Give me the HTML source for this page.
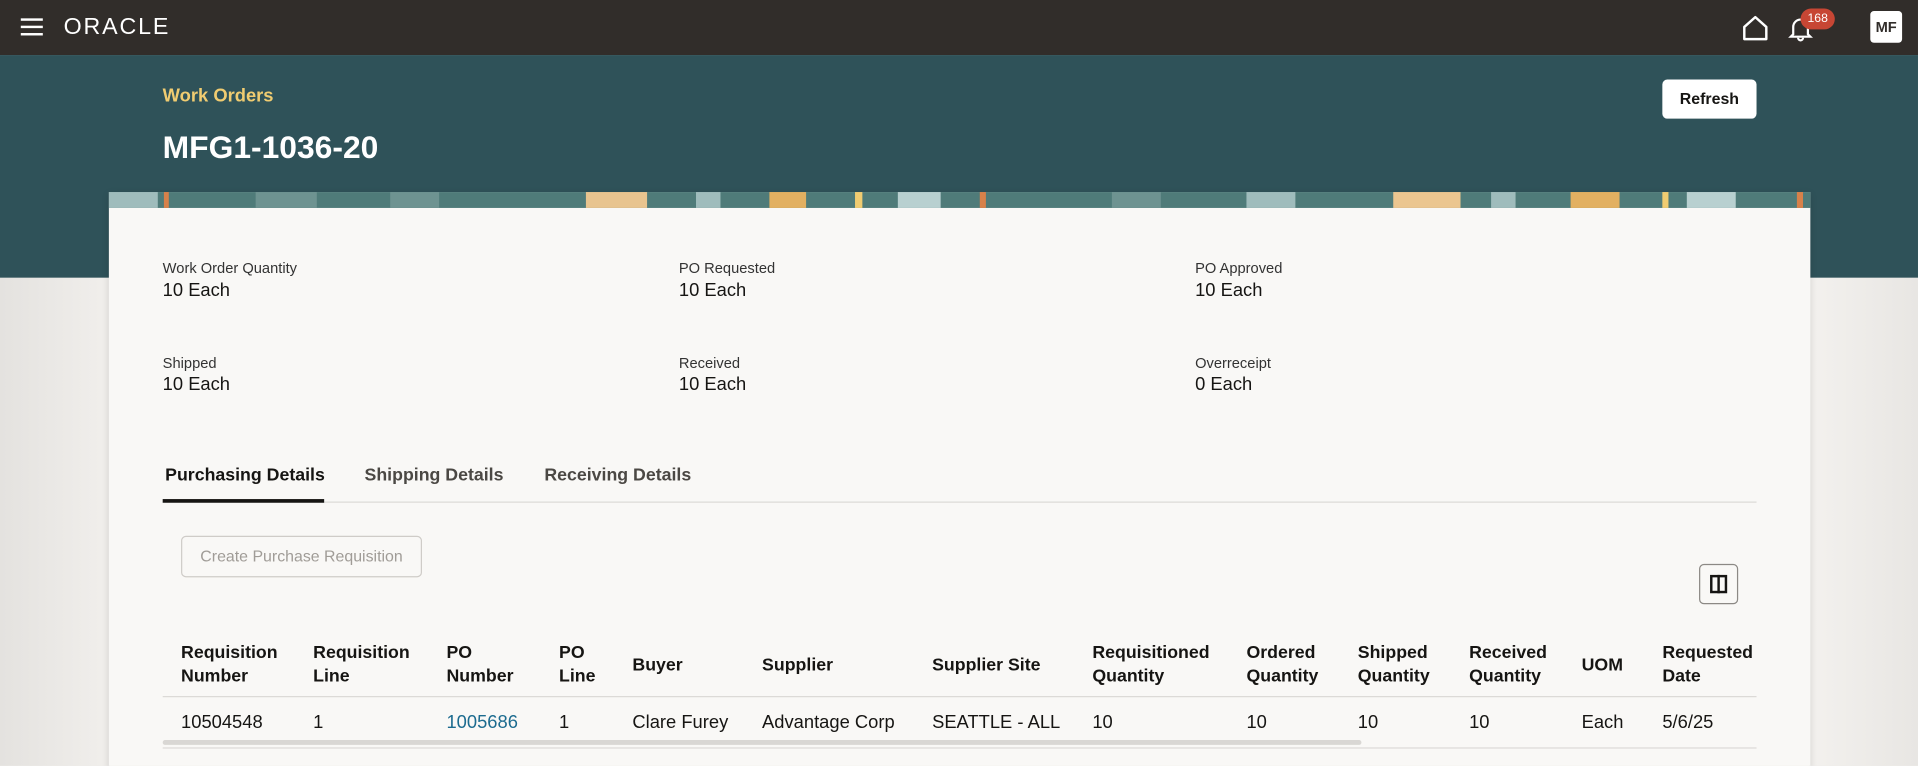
<!DOCTYPE html>
<html><head><meta charset="utf-8">
<style>
*{margin:0;padding:0;box-sizing:border-box}
html,body{width:1918px;height:766px;overflow:hidden;background:#eeece9}
#w{position:absolute;left:0;top:0;width:1568px;height:626px;transform:scale(1.22321);transform-origin:0 0;font-family:"Liberation Sans",sans-serif;color:#161513;overflow:hidden;background:linear-gradient(90deg,#e4e2df 0,#f1efec 90px,#f3f1ee 1480px,#e8e6e3 1568px)}
.a{position:absolute;white-space:nowrap}
.hdr{position:absolute;left:0;top:0;width:1568px;height:45px;background:#312d2a}
.band{position:absolute;left:0;top:45px;width:1568px;height:182px;background:#2f5259}
.card{position:absolute;left:89px;top:157px;width:1391px;height:490px;background:#f9f8f6;box-shadow:0 2px 6px rgba(0,0,0,.15)}
.strip{position:absolute;left:89px;top:157px;width:1391px;height:13px;background:#4f7b79;overflow:hidden}
.strip i{position:absolute;top:0;height:13px;display:block}
.lbl{font-size:12px;color:#333}
.val{font-size:15px}
.th{font-size:14.5px;font-weight:bold;line-height:19px;color:#161513}
.td{font-size:15px}
.tab{font-size:14.5px;font-weight:bold}
</style></head><body><div id="w">
<div class="hdr"></div>
<div class="a" style="left:17px;top:15px;width:18px;height:2px;background:#fff;box-shadow:0 6px 0 #fff,0 12px 0 #fff"></div>
<div class="a" style="left:52px;top:12px;color:#fff;font-size:19px;letter-spacing:1.5px">ORACLE</div>
<svg class="a" style="left:1424px;top:12px" width="22" height="22" viewBox="0 0 22 22"><path d="M2 10 L11 2 L20 10 V20 H2 Z" fill="none" stroke="#fff" stroke-width="2" stroke-linejoin="round"/></svg>
<svg class="a" style="left:1461px;top:12px" width="22" height="22" viewBox="0 0 22 22"><path d="M5 16 V10 A6 6 0 0 1 17 10 V16 L19 18 H3 Z M9 19 A2 2 0 0 0 13 19" fill="none" stroke="#fff" stroke-width="1.8"/></svg>
<div class="a" style="left:1472px;top:7px;width:28px;height:17px;border-radius:9px;background:#c74634;color:#fff;font-size:10px;text-align:center;line-height:17px">168</div>
<div class="a" style="left:1529px;top:9px;width:26px;height:26px;border-radius:3px;background:#fff;color:#312d2a;font-size:12px;font-weight:bold;text-align:center;line-height:26px">MF</div>
<div class="band"></div>
<div class="a" style="left:133px;top:70px;color:#f0cc71;font-size:15px;font-weight:bold">Work Orders</div>
<div class="a" style="left:133px;top:105px;color:#fff;font-size:26px;font-weight:bold">MFG1-1036-20</div>
<div class="a" style="left:1359px;top:65px;width:77px;height:32px;background:#fff;border-radius:4px;font-size:13px;font-weight:bold;text-align:center;line-height:32px">Refresh</div>
<div class="card"></div>
<div class="strip">
<i style="left:0;width:40px;background:#9fbcbc"></i><i style="left:45px;width:4px;background:#d7814a"></i><i style="left:120px;width:50px;background:#6e9391"></i><i style="left:230px;width:40px;background:#6e9391"></i><i style="left:390px;width:50px;background:#e8c48f"></i><i style="left:480px;width:20px;background:#9fbcbc"></i><i style="left:540px;width:30px;background:#e2b061"></i><i style="left:610px;width:6px;background:#f0cc71"></i><i style="left:645px;width:35px;background:#b8d0d0"></i><i style="left:712px;width:5px;background:#d7814a"></i><i style="left:820px;width:40px;background:#6e9391"></i><i style="left:930px;width:40px;background:#9fbcbc"></i><i style="left:1050px;width:55px;background:#ebc690"></i><i style="left:1130px;width:20px;background:#9fbcbc"></i><i style="left:1195px;width:40px;background:#e2b061"></i><i style="left:1270px;width:5px;background:#f0cc71"></i><i style="left:1290px;width:40px;background:#b8d0d0"></i><i style="left:1380px;width:5px;background:#d7814a"></i>
</div>
<div class="a lbl" style="left:133px;top:212px">Work Order Quantity</div><div class="a val" style="left:133px;top:229px">10 Each</div>
<div class="a lbl" style="left:555px;top:212px">PO Requested</div><div class="a val" style="left:555px;top:229px">10 Each</div>
<div class="a lbl" style="left:977px;top:212px">PO Approved</div><div class="a val" style="left:977px;top:229px">10 Each</div>
<div class="a lbl" style="left:133px;top:290px">Shipped</div><div class="a val" style="left:133px;top:306px">10 Each</div>
<div class="a lbl" style="left:555px;top:290px">Received</div><div class="a val" style="left:555px;top:306px">10 Each</div>
<div class="a lbl" style="left:977px;top:290px">Overreceipt</div><div class="a val" style="left:977px;top:306px">0 Each</div>
<div class="a tab" style="left:135px;top:381px">Purchasing Details</div>
<div class="a tab" style="left:298px;top:381px;color:#4b4844">Shipping Details</div>
<div class="a tab" style="left:445px;top:381px;color:#4b4844">Receiving Details</div>
<div class="a" style="left:133px;top:410px;width:1303px;height:1px;background:#dcdad7"></div>
<div class="a" style="left:133px;top:408px;width:132px;height:3px;background:#161513"></div>
<div class="a" style="left:148px;top:438px;width:197px;height:34px;border:1px solid #cfccc8;border-radius:4px;font-size:13px;color:#a09c97;text-align:center;line-height:32px">Create Purchase Requisition</div>
<div class="a" style="left:1389px;top:461px;width:32px;height:33px;border:1px solid #8c8985;border-radius:4px"></div>
<div class="a" style="left:1398px;top:470px;width:14px;height:15px;border:2px solid #161513"></div>
<div class="a" style="left:1404px;top:470px;width:2px;height:15px;background:#161513"></div>
<div class="a th" style="left:148px;top:525px">Requisition<br>Number</div>
<div class="a th" style="left:256px;top:525px">Requisition<br>Line</div>
<div class="a th" style="left:365px;top:525px">PO<br>Number</div>
<div class="a th" style="left:457px;top:525px">PO<br>Line</div>
<div class="a th" style="left:517px;top:535px">Buyer</div>
<div class="a th" style="left:623px;top:535px">Supplier</div>
<div class="a th" style="left:762px;top:535px">Supplier Site</div>
<div class="a th" style="left:893px;top:525px">Requisitioned<br>Quantity</div>
<div class="a th" style="left:1019px;top:525px">Ordered<br>Quantity</div>
<div class="a th" style="left:1110px;top:525px">Shipped<br>Quantity</div>
<div class="a th" style="left:1201px;top:525px">Received<br>Quantity</div>
<div class="a th" style="left:1293px;top:535px">UOM</div>
<div class="a th" style="left:1359px;top:525px">Requested<br>Date</div>
<div class="a" style="left:133px;top:569px;width:1303px;height:1px;background:#dcdad7"></div>
<div class="a td" style="left:148px;top:582px">10504548</div>
<div class="a td" style="left:256px;top:582px">1</div>
<div class="a td" style="left:365px;top:582px;color:#1c6b8f">1005686</div>
<div class="a td" style="left:457px;top:582px">1</div>
<div class="a td" style="left:517px;top:582px">Clare Furey</div>
<div class="a td" style="left:623px;top:582px">Advantage Corp</div>
<div class="a td" style="left:762px;top:582px">SEATTLE - ALL</div>
<div class="a td" style="left:893px;top:582px">10</div>
<div class="a td" style="left:1019px;top:582px">10</div>
<div class="a td" style="left:1110px;top:582px">10</div>
<div class="a td" style="left:1201px;top:582px">10</div>
<div class="a td" style="left:1293px;top:582px">Each</div>
<div class="a td" style="left:1359px;top:582px">5/6/25</div>
<div class="a" style="left:133px;top:605px;width:980px;height:4px;background:#d9d7d4;border-radius:2px"></div>
<div class="a" style="left:133px;top:611px;width:1303px;height:1px;background:#dcdad7"></div>
</div></body></html>
